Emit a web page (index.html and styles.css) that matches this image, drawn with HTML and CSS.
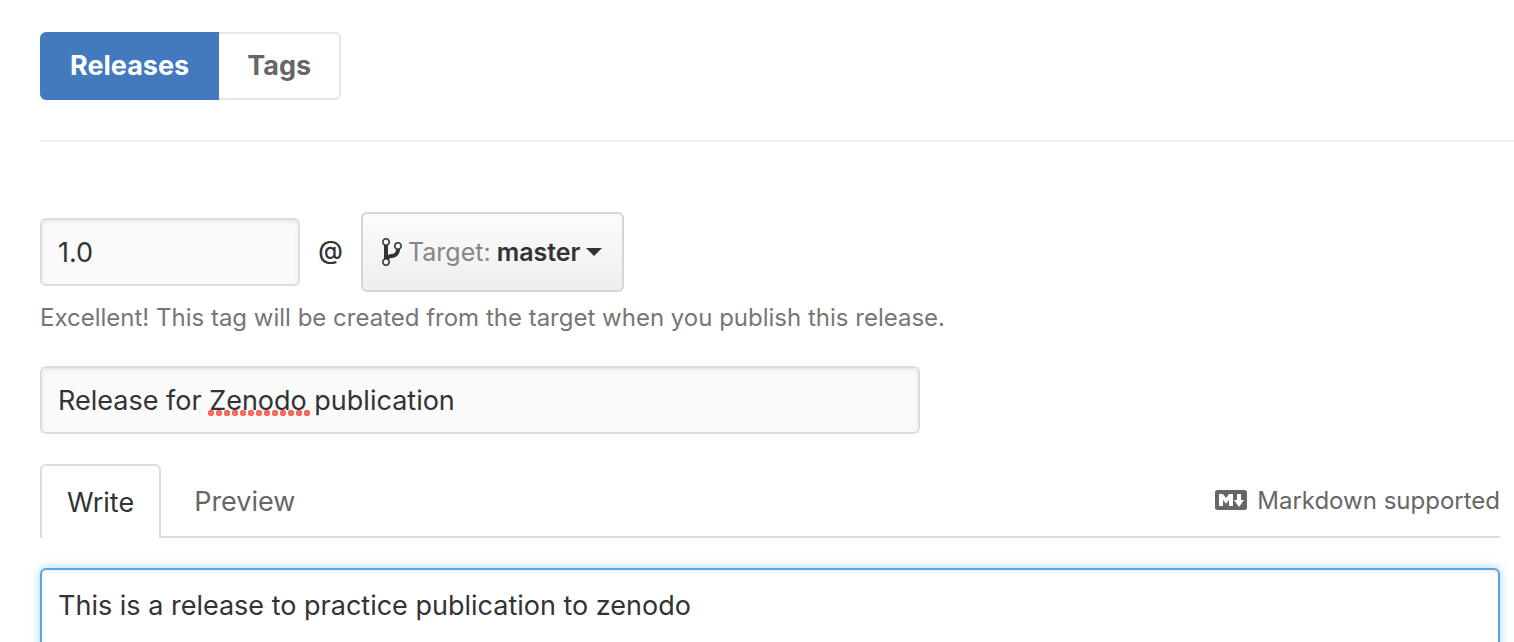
FILE: index.html
```
<!DOCTYPE html>
<html lang="en">
<head>
<meta charset="utf-8">
<title>New release</title>
<link rel="stylesheet" href="styles.css">
</head>
<body>
<main class="page">
  <header class="page-head">
    <nav class="subnav" aria-label="Releases and tags">
      <a class="subnav-item selected" href="#releases" aria-current="page">Releases</a>
      <a class="subnav-item" href="#tags">Tags</a>
    </nav>
  </header>
  <form class="release-form">
    <div class="tag-row">
      <input class="field tag-field" type="text" value="1.0" aria-label="Tag version">
      <span class="at">@</span>
      <button class="target-button" type="button">
        <svg class="branch-icon" viewBox="0 0 10 16" aria-hidden="true"><path fill-rule="evenodd" d="M10 5c0-1.11-.89-2-2-2a1.993 1.993 0 0 0-1 3.72v.3c-.02.52-.23.98-.63 1.38-.4.4-.86.61-1.38.63-.83.02-1.48.16-2 .45V4.72a1.993 1.993 0 0 0-1-3.72C.88 1 0 1.89 0 3a2 2 0 0 0 1 1.72v6.56c-.59.35-1 .99-1 1.72 0 1.11.89 2 2 2 1.11 0 2-.89 2-2 0-.53-.2-1-.53-1.36.09-.06.48-.41.59-.47.25-.11.56-.17.94-.17 1.05-.05 1.95-.45 2.75-1.25S8.95 7.77 9 6.73h-.02C9.59 6.37 10 5.73 10 5zM2 1.8c.66 0 1.2.55 1.2 1.2 0 .65-.55 1.2-1.2 1.2C1.35 4.2.8 3.65.8 3c0-.65.55-1.2 1.2-1.2zm0 12.41c-.66 0-1.2-.55-1.2-1.2 0-.65.55-1.2 1.2-1.2.65 0 1.2.55 1.2 1.2 0 .65-.55 1.2-1.2 1.2zm6-8c-.66 0-1.2-.55-1.2-1.2 0-.65.55-1.2 1.2-1.2.65 0 1.2.55 1.2 1.2 0 .65-.55 1.2-1.2 1.2z"/></svg>
        <span class="target-label">Target:</span>
        <span class="target-name">master</span>
        <span class="caret"></span>
      </button>
    </div>
    <p class="hint">Excellent! This tag will be created from the target when you publish this release.</p>
    <div class="title-wrap">
      <input class="field title-field" type="text" value="Release for Zenodo publication" aria-label="Release title" spellcheck="false">
      <span class="spell-mark"></span>
    </div>
    <div class="tabs">
      <button class="tab active" type="button">Write</button>
      <button class="tab" type="button">Preview</button>
      <a class="markdown-link" href="#markdown">
        <svg class="markdown-icon" viewBox="0 0 16 16" aria-hidden="true"><path fill-rule="evenodd" d="M14.85 3H1.15C.52 3 0 3.52 0 4.15v7.69C0 12.48.52 13 1.15 13h13.69c.64 0 1.15-.52 1.15-1.15v-7.7C16 3.52 15.48 3 14.85 3zM9 11H7V8L5.5 9.92 4 8v3H2V5h2l1.5 2L7 5h2v6zm2.99.5L9.5 8H11V5h2v3h1.5l-2.51 3.5z"/></svg>
        <span class="markdown-text">Markdown supported</span>
      </a>
    </div>
    <textarea class="notes" aria-label="Release notes" spellcheck="false">This is a release to practice publication to zenodo</textarea>
  </form>
</main>
</body>
</html>
```
FILE: styles.css
```
* {
  box-sizing: border-box;
}

body {
  margin: 0;
  height: 100vh;
  overflow: hidden;
  background: #fff;
  color: #333;
  font-family: Inter, "Liberation Sans", sans-serif;
  font-size: 27px;
  line-height: 40px;
}

button,
input,
textarea {
  font: inherit;
  color: inherit;
}

.page {
  padding: 32px 0 0 40px;
}

.page-head {
  padding-bottom: 40px;
  border-bottom: 2px solid #eee;
}

.subnav {
  display: flex;
}

.subnav-item {
  padding: 12px 28px;
  border: 2px solid #e5e5e5;
  border-left: 0;
  border-radius: 0 6px 6px 0;
  color: #666;
  font-weight: 700;
  text-decoration: none;
}

.subnav-item.selected {
  border: 2px solid #4379bd;
  border-radius: 6px 0 0 6px;
  background: #4379bd;
  color: #fff;
}

.release-form {
  padding: 70px 14px 0 0;
}

.tag-row {
  display: flex;
  align-items: center;
}

.field {
  height: 68px;
  padding: 0 16px;
  border: 2px solid #ddd;
  border-radius: 6px;
  background: #fafafa;
  box-shadow: inset 0 2px 4px rgba(0, 0, 0, 0.075);
  outline: 0;
}

.tag-field {
  width: 260px;
}

.at {
  width: 61px;
  padding-bottom: 4px;
  text-align: center;
  font-size: 25px;
  font-weight: 500;
}

.target-button {
  display: flex;
  align-items: center;
  height: 80px;
  padding: 0 20px 0 19px;
  border: 2px solid #d5d5d5;
  border-radius: 6px;
  background: linear-gradient(#fcfcfc, #eee);
  font-size: 25px;
}

.branch-icon {
  width: 20px;
  height: 32px;
  margin-right: 6px;
  fill: #333;
}

.target-label {
  margin-right: 6px;
  color: #868686;
}

.target-name {
  font-weight: 600;
}

.caret {
  margin-left: 5px;
  border: 8px solid transparent;
  border-top-color: #333;
  border-bottom: 0;
}

.hint {
  margin: 6px 0 28px;
  color: #767676;
  font-size: 24px;
}

.title-wrap {
  position: relative;
  max-width: 880px;
}

.title-field {
  display: block;
  width: 100%;
}

.spell-mark {
  position: absolute;
  left: 168px;
  top: 44px;
  width: 102px;
  height: 6px;
  background: radial-gradient(circle at 3px 3px, #fb6a62 3px, transparent 3px) 0 0 / 8px 6px repeat-x;
}

.tabs {
  display: flex;
  align-items: center;
  height: 74px;
  margin-top: 30px;
  border-bottom: 2px solid #ddd;
}

.tab {
  align-self: stretch;
  height: 74px;
  padding: 2px 33px 0;
  border: 0;
  background: none;
  color: #666;
}

.tab.active {
  padding: 2px 25px 0;
  border: 2px solid #ddd;
  border-bottom: 0;
  border-radius: 6px 6px 0 0;
  background: #fff;
  color: #333;
}

.markdown-link {
  display: flex;
  align-items: center;
  gap: 10px;
  margin-left: auto;
  color: #666;
  font-size: 24px;
  text-decoration: none;
}

.markdown-text {
  padding-top: 2px;
}

.markdown-icon {
  width: 32px;
  height: 32px;
  fill: #666;
}

.notes {
  display: block;
  width: 100%;
  height: 400px;
  margin-top: 30px;
  padding: 16px;
  border: 2px solid #51a7e8;
  border-radius: 6px;
  background: #fff;
  box-shadow: inset 0 2px 4px rgba(0, 0, 0, 0.075), 0 0 10px rgba(81, 167, 232, 0.5);
  outline: 0;
  resize: none;
}
```
